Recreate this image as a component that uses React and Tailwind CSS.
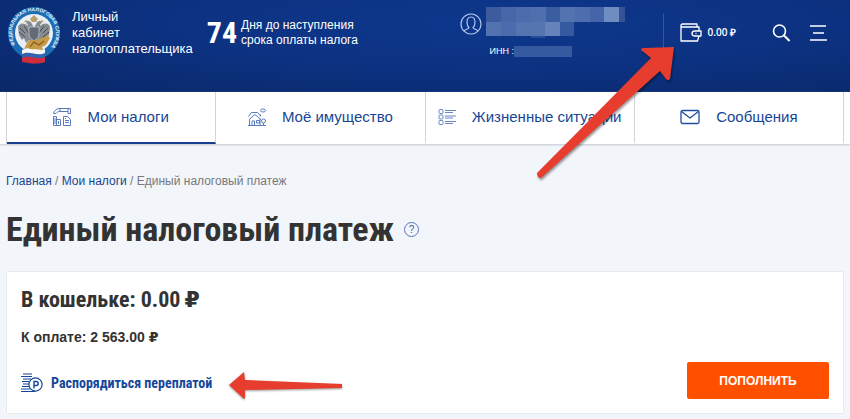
import React from 'react';

const sans = "font-['Liberation_Sans',Arial,sans-serif]";
const narrow = "font-['Roboto_Condensed','Liberation_Sans_Narrow','Liberation_Sans',sans-serif]";

const Emblem = () => (
    <svg viewBox="0 0 54 60" className="w-[54px] h-[60px] shrink-0" aria-hidden="true">
        <defs>
            <path id="ring" d="M11.4 44.6 A22 22 0 1 1 42.6 44.6" />
        </defs>
        <circle cx="27" cy="29" r="26" fill="#1a6db5" />
        <circle cx="27" cy="29" r="19" fill="#e8eef3" />
        <text fontSize="5" fontWeight="bold" fill="#e4f1fa" fontFamily="Liberation Sans, sans-serif">
            <textPath href="#ring" startOffset="5">ФЕДЕРАЛЬНАЯ НАЛОГОВАЯ СЛУЖБА</textPath>
        </text>
        <path d="M25 20c-2-4-6-4-6-1 1 0 2 1 2 3-4-4-9-3-10 1l1 8 3 5 2-2 2 5 3-3 5 8 5-8 3 3 2-5 2 2 3-5 1-8c-1-4-6-5-10-1 0-2 1-3 2-3 0-3-4-3-6 1l-2 4z" fill="#858b90" />
        <path d="M13 24l5 5M12 28l6 5M41 24l-5 5M42 28l-6 5M17 22l5 7M37 22l-5 7" stroke="#454d55" strokeWidth="1" />
        <path d="M23 15l4-4 4 4-2 3h-4zM17 18l2-2 3 2zM32 18l3-2 2 2z" fill="#b7a06a" />
        <path d="M22 23h10v8c0 3-3 4-5 6-2-2-5-3-5-6z" fill="#626c78" stroke="#c4c8cb" strokeWidth=".8" />
        <path d="M21 37c3-2 8 0 11-2 3-1 5 0 8-4l3 3-4 7-4 2 1 3-9-1-6 3 1-4-5 1z" fill="#c89a48" />
        <path d="M23 43l4-5 5 3 5-4" fill="none" stroke="#7c5a25" strokeWidth="1.2" />
        <path d="M15 46c8-4 15 3 23-1v6c-9 4-16-3-23 1z" fill="#f7f7f7" />
        <path d="M15 50c8-4 15 3 23-1v5c-9 4-16-3-23 1z" fill="#3263ad" />
        <path d="M15 54c8-4 15 3 23-1v5c-9 3-16 1-23 0z" fill="#d12c3d" />
    </svg>
);

const UserIcon = () => (
    <svg viewBox="0 0 22 22" className="w-[22px] h-[22px] shrink-0" fill="none" stroke="#b4c5ea" strokeWidth="1.2" aria-hidden="true">
        <circle cx="11" cy="11" r="10" />
        <path d="M4 18c1-2 5-1.500 5-3.500-1.500-1-2-2.500-2-5C7 6 8.500 4 11 4s4 2 4 5.500c0 2.500-.5 4-2 5 0 2 4 1.500 5 3.500" />
    </svg>
);

const mosaic = [
    [0, 0, 15, 15, '#3c5a9d'], [15, 0, 15, 15, '#4766a7'], [30, 0, 15, 15, '#4c6cac'], [45, 0, 15, 15, '#4f6fae'],
    [60, 0, 14, 15, '#3b5da2'], [74, 0, 15, 15, '#5272b0'], [89, 0, 15, 15, '#4d6dac'], [104, 0, 14, 15, '#4565a8'],
    [118, 0, 15, 15, '#708dc2'], [133, 0, 6, 15, '#345497'],
    [0, 15, 15, 14, '#5472af'], [15, 15, 15, 14, '#4c6bac'], [30, 15, 29, 14, '#5575b1'], [59, 15, 15, 14, '#6582ba'],
    [74, 15, 14, 14, '#365aa0'], [45, 29, 14, 2, '#264b99'],
];

const WalletIcon = () => (
    <svg viewBox="0 0 22 19" className="w-[22px] h-[19px] shrink-0" fill="none" stroke="#fff" strokeWidth="1.3" strokeLinejoin="round" aria-hidden="true">
        <path d="M17 4V1H2.500C.5 1 .5 4 2.500 4H19v4M1 2.500V18h16.500l1.500-5" />
        <path d="M21 8h-6c-4 0-4 5 0 5h6zM15.500 10.500h1" />
    </svg>
);

const TaxIcon = () => (
    <svg viewBox="0 0 18 18" className="w-[18px] h-[18px] shrink-0" fill="none" stroke="#5879bd" aria-hidden="true">
        <path d="M.5 5.500C1.500 2 4 .5 7 .5h10.500v5M.5 5.500H3C4 4 5 3.500 7 3.500h8M7 .5v3M15 .5v5h2.500" />
        <path d="M.5 17.500v-9h3v9zM3.500 17.500v-6h4v6zM2 10v6M5.500 13v3" />
        <path d="M10.500 8.500h4l3 3v6h-7zM12 12.500h4M12 14.500h4M12 10.500h1" />
    </svg>
);

const PropertyIcon = () => (
    <svg viewBox="0 0 18 18" className="w-[18px] h-[18px] shrink-0" fill="none" stroke="#5879bd" aria-hidden="true">
        <path d="M.5 8.500l3-4h6l3.500 4M1 11.500l6-5 6 5M12.500 6.500V8" />
        <ellipse cx="15" cy="2.500" rx="2.500" ry="1.500" />
        <path d="M1.500 11.500v6M4 17v-4h2.500v4M8.500 12.500h3V15h-3zM12 11v6M0 17.500h18" />
        <circle cx="15.500" cy="13" r="2" />
        <path d="M15.500 15v2" />
    </svg>
);

const SituationsIcon = () => (
    <svg viewBox="0 0 18 18" className="w-[18px] h-[18px] shrink-0" fill="none" stroke="#6a87c4" aria-hidden="true">
        <rect x="1" y="1.500" width="4" height="4" rx="1" />
        <rect x="1" y="7" width="4" height="4" rx="1" />
        <rect x="1" y="12.500" width="4" height="4" rx="1" />
        <path d="M7 2.500h11M7 4.500h8M7 8h11M7 10h8M7 13.500h11M7 15.500h8" />
    </svg>
);

const MailIcon = () => (
    <svg viewBox="0 0 20 16" className="w-5 h-4 shrink-0" fill="none" stroke="#1d4e9f" strokeWidth="1.3" strokeLinejoin="round" aria-hidden="true">
        <rect x="1" y="1.500" width="18" height="13" rx="1.500" />
        <path d="M1.500 2.500L10 9l8.500-6.500" />
    </svg>
);

const CoinsIcon = () => (
    <svg viewBox="0 0 22 20" className="w-[22px] h-5 shrink-0" fill="none" stroke="#14479c" strokeWidth="1.2" aria-hidden="true">
        <path d="M2 1h9M0 3.500h11M2 6h8M1 8.500h7M2 11h6M1 13.500h7M0 16h9M0 18.500h14" />
        <circle cx="14.500" cy="11.500" r="6.600" fill="#fff" />
        <path d="M13 15.500V8.500h2.200c2.700 0 2.700 4 0 4H13" strokeWidth="1.4" />
    </svg>
);

const Ruble = () => <span className="ml-1 font-['DejaVu_Sans',sans-serif]">₽</span>;

const tabs = [
    { label: 'Мои налоги', Icon: TaxIcon, active: true },
    { label: 'Моё имущество', Icon: PropertyIcon },
    { label: 'Жизненные ситуации', Icon: SituationsIcon },
    { label: 'Сообщения', Icon: MailIcon },
];

const Header = () => (
    <header className="h-[92px] flex items-start bg-[radial-gradient(ellipse_at_58%_25%,#0e388d,#0c3180_50%,#0a2867)] text-white">
        <a href="#" className="flex items-start ml-[7px] mt-1">
            <Emblem />
            <span className="ml-[11px] mt-[5px] text-[13px] leading-4">
                Личный<br />кабинет<br />налогоплательщика
            </span>
        </a>
        <div className="flex items-center ml-[14px] mt-[17px]">
            <span className={`${narrow} text-[30px] leading-8 font-bold`}>74</span>
            <span className="ml-1 text-xs leading-[15px] whitespace-nowrap">
                Дня до наступления<br />срока оплаты налога
            </span>
        </div>
        <div className="flex items-start ml-auto mr-[38px] mt-[7px]">
            <span className="mt-[6px]"><UserIcon /></span>
            <div className="ml-1">
                <svg viewBox="0 0 139 31" className="w-[139px] h-[31px]" shapeRendering="crispEdges" aria-hidden="true">
                    {mosaic.map(([x, y, w, h, fill], i) => (
                        <rect key={i} x={x} y={y} width={w} height={h} fill={fill} />
                    ))}
                </svg>
                <div className="flex items-center ml-1 mt-[7px] text-[9px] leading-3">
                    ИНН :
                    <span className="w-[58px] h-[11px] bg-[#365a9f]" />
                </div>
            </div>
        </div>
        <div className="flex items-center h-[35px] mt-[13px] pl-4 mr-[23px] border-l border-[#34549b]">
            <a href="#" className="flex items-center mt-1">
                <WalletIcon />
                <span className="ml-[6px] text-[10px] font-semibold font-['Open_Sans',sans-serif] whitespace-nowrap">0.00 ₽</span>
            </a>
            <button type="button" aria-label="Поиск" className="ml-9 mt-1">
                <svg viewBox="0 0 18 18" className="w-[18px] h-[18px]" fill="none" stroke="#fff" strokeWidth="1.6">
                    <circle cx="7.500" cy="7" r="6" />
                    <path d="M12 11.500L17.500 17" strokeWidth="2" />
                </svg>
            </button>
            <button type="button" aria-label="Меню" className="ml-5 mt-1">
                <svg viewBox="0 0 17 16" className="w-[17px] h-4" stroke="#fff" strokeWidth="1.4">
                    <path d="M0 1h16M3 8h11M0 15h17" />
                </svg>
            </button>
        </div>
    </header>
);

const Tabs = () => (
    <nav className="px-[6px] bg-white shadow-[0_1px_2px_#c3c8d0]">
        <div className="grid grid-cols-4 border-l border-[#d2d4dc]">
            {tabs.map(({ label, Icon, active }) => (
                <a
                    key={label}
                    href="#"
                    className={`h-[52px] flex items-center justify-center gap-4 border-r border-[#d2d4dc] border-b-2 text-[15px] text-[#174594] whitespace-nowrap ${active ? 'border-b-[#173f8d]' : 'border-b-white'}`}
                >
                    <Icon />
                    {label}
                </a>
            ))}
        </div>
    </nav>
);

const Arrows = () => (
    <>
        {/* pointer to the wallet balance */}
        <svg viewBox="0 0 144 138" className="absolute left-[534px] top-[44px] w-[144px] h-[138px] pointer-events-none drop-shadow-[1px_2px_1px_#00000066]" aria-hidden="true">
            <path d="M3 129L117 14L107 6Q107 4 110 4L140 3L136 35Q134 37 132 35L126 27L7 134Q3 134 3 129z" fill="#e73d2e" />
        </svg>
        {/* pointer to the overpayment link */}
        <svg viewBox="0 0 116 30" className="absolute left-[228px] top-[371px] w-[116px] h-[30px] pointer-events-none drop-shadow-[0_1px_1px_#00000066]" aria-hidden="true">
            <path d="M1 14L16 1L17 9L114 13V17L17 19V27Q16 29 14 26z" fill="#e73d2e" />
        </svg>
    </>
);

export default function App() {
    return (
        <div className={`${sans} relative min-h-screen bg-[#f2f5f9] text-[#333]`}>
            <Header />
            <Tabs />
            <main className="px-[6px] pt-[29px] pb-[6px]">
                <nav className="text-xs leading-4 text-[#77797d]">
                    <a href="#" className="text-[#174594]">Главная</a> / <a href="#" className="text-[#174594]">Мои налоги</a> / Единый налоговый платеж
                </nav>
                <div className="flex items-center mt-[18px] mb-5">
                    <h1 className={`${narrow} text-[34px] leading-[44px] font-bold whitespace-nowrap`}>Единый налоговый платеж</h1>
                    <button type="button" aria-label="Справка" className="ml-[10px] w-[15px] h-[15px] rounded-full border border-[#5b74bd] text-[10px] leading-[13px] text-[#3d5cae]">?</button>
                </div>
                <section className="flex items-end justify-between bg-white border border-[#e6e9ed] rounded-xs px-[14px] pt-3 pb-[14px]">
                    <div className="pb-1">
                        <h2 className={`${narrow} text-[22px] leading-8 font-bold`}>В кошельке: 0.00<Ruble /></h2>
                        <p className="mt-[11px] text-sm leading-5 font-bold">К оплате: 2 563.00<Ruble /></p>
                        <a href="#" className={`${narrow} flex items-center gap-2 mt-6 text-sm leading-6 font-bold text-[#14479c]`}>
                            <CoinsIcon />
                            Распорядиться переплатой
                        </a>
                    </div>
                    <button type="button" className="w-[142px] h-[37px] rounded-xs bg-[#ff5000] text-xs font-bold text-white">ПОПОЛНИТЬ</button>
                </section>
            </main>
            <Arrows />
        </div>
    );
}
